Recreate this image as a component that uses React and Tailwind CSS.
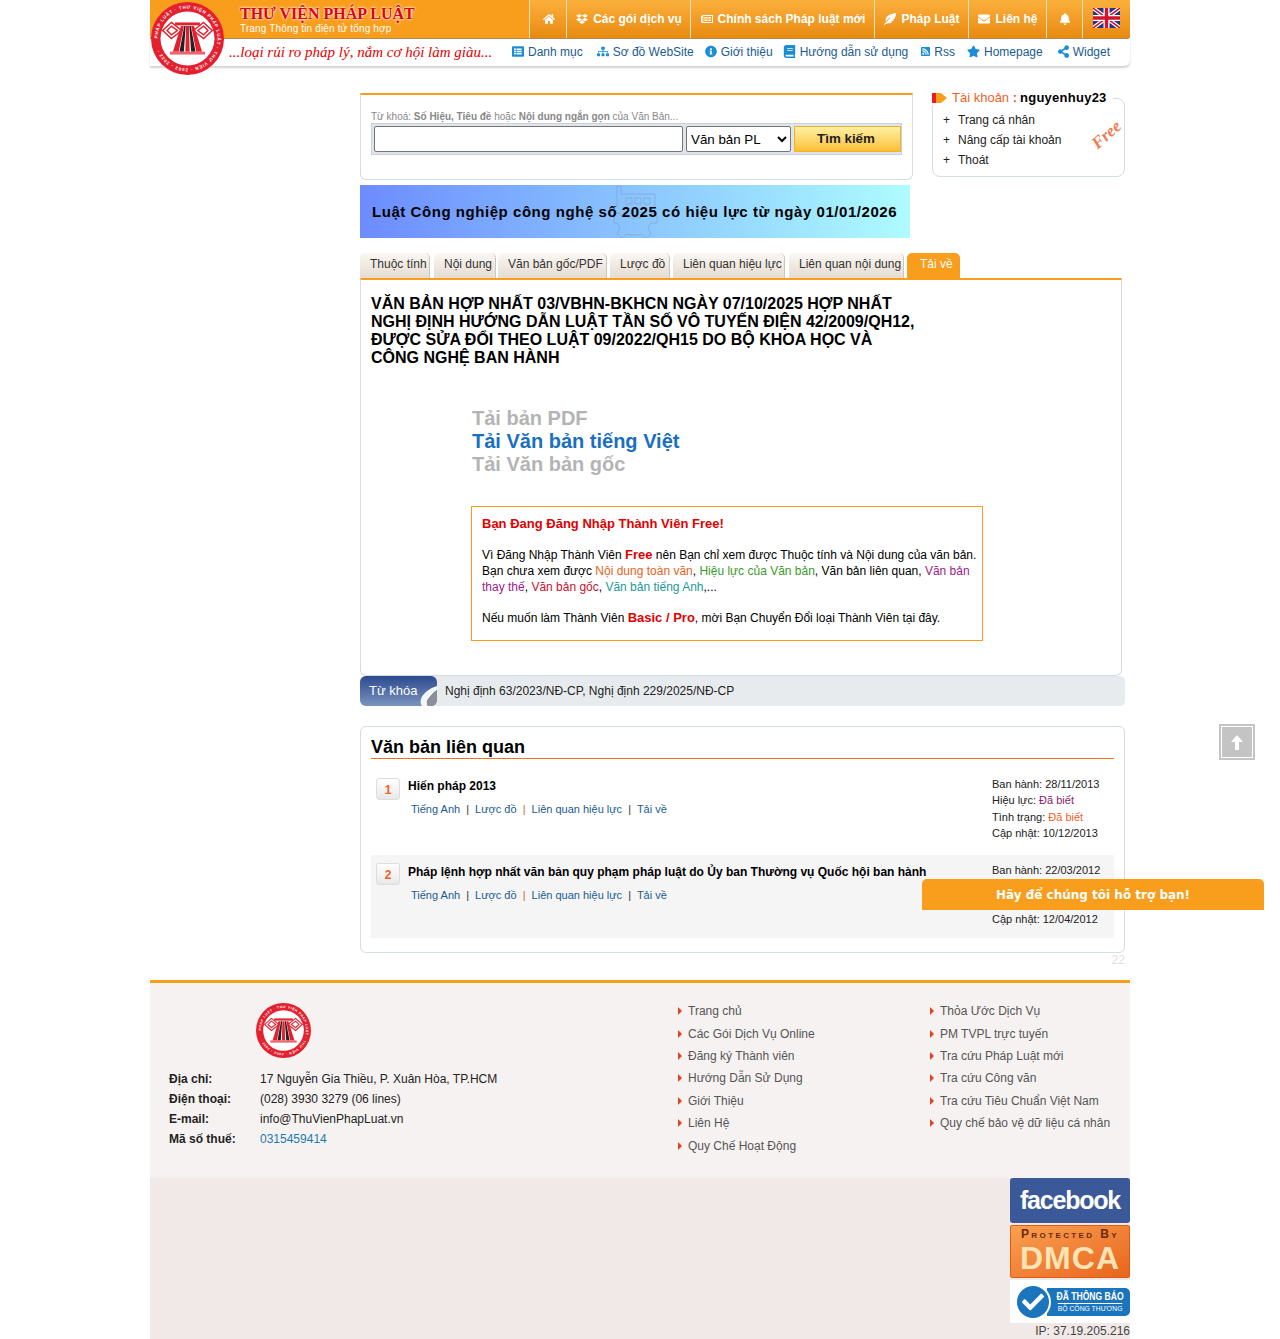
import React from "react";
import {
  FaHome, FaDropbox, FaRegNewspaper, FaEnvelope, FaBell, FaListAlt, FaSitemap,
  FaInfoCircle, FaBook, FaRssSquare, FaStar, FaShareAlt, FaFeatherAlt, FaCheck,
} from "react-icons/fa";

const topNav = [
  { icon: FaHome, label: "", width: "w-[37px]" },
  { icon: FaDropbox, label: "Các gói dịch vụ", width: "w-[124px]" },
  { icon: FaRegNewspaper, label: "Chính sách Pháp luật mới", width: "w-[184px]" },
  { icon: FaFeatherAlt, label: "Pháp Luật", width: "w-[94px]" },
  { icon: FaEnvelope, label: "Liên hệ", width: "w-[78px]" },
  { icon: FaBell, label: "", width: "w-[36px]" },
];

const subNav = [
  { icon: FaListAlt, label: "Danh mục", ml: "ml-0", w: "w-[12px]" },
  { icon: FaSitemap, label: "Sơ đồ WebSite", ml: "ml-[14px]", w: "w-[12px]" },
  { icon: FaInfoCircle, label: "Giới thiệu", ml: "ml-[11px]", w: "w-[12px]" },
  { icon: FaBook, label: "Hướng dẫn sử dụng", ml: "ml-[10px]", w: "w-[13px]" },
  { icon: FaRssSquare, label: "Rss", ml: "ml-[13px]", w: "w-[9px]" },
  { icon: FaStar, label: "Homepage", ml: "ml-[12px]", w: "w-[13px]" },
  { icon: FaShareAlt, label: "Widget", ml: "ml-[15px]", w: "w-[11px]" },
];

const tabs = [
  { label: "Thuộc tính", width: "w-[70px]", ml: "ml-0" },
  { label: "Nội dung", width: "w-[62px]", ml: "ml-[4px]" },
  { label: "Văn bản gốc/PDF", width: "w-[109px]", ml: "ml-[2px]" },
  { label: "Lược đồ", width: "w-[60px]", ml: "ml-[3px]" },
  { label: "Liên quan hiệu lực", width: "w-[112px]", ml: "ml-[3px]" },
  { label: "Liên quan nội dung", width: "w-[115px]", ml: "ml-[4px]" },
];

const footerLeft = ["Trang chủ", "Các Gói Dịch Vụ Online", "Đăng ký Thành viên", "Hướng Dẫn Sử Dụng", "Giới Thiệu", "Liên Hệ", "Quy Chế Hoạt Động"];
const footerRight = ["Thỏa Ước Dịch Vụ", "PM TVPL trực tuyến", "Tra cứu Pháp Luật mới", "Tra cứu Công văn", "Tra cứu Tiêu Chuẩn Việt Nam", "Quy chế bảo vệ dữ liệu cá nhân"];

function Seal({ size, id }) {
  return (
    <svg width={size} height={size} viewBox="0 0 100 100">
      <circle cx="50" cy="50" r="50" fill="#e5202e" />
      <circle cx="50" cy="50" r="37" fill="#fff" />
      <defs>
        <path id={id} d="M50 50 m-41 0 a41 41 0 1 1 82 0 a41 41 0 1 1 -82 0" />
      </defs>
      <text fontSize="6" fontWeight="700" fill="#fff" fontFamily="Liberation Sans, sans-serif" letterSpacing="1.1">
        <textPath href={`#${id}`}>PHÁP LUẬT · THƯ VIỆN PHÁP LUẬT · THƯ VIỆN · 2002 - 2022 ·</textPath>
      </text>
      {/* cap trai, cap phai */}
      <path d="M28 28L42 39 28 50 16 39z" fill="none" stroke="#e5202e" strokeWidth="2" />
      <path d="M28 33L36 39 28 45 22 39z" fill="none" stroke="#e5202e" strokeWidth="2" />
      <path d="M72 28L84 39 72 50 58 39z" fill="none" stroke="#e5202e" strokeWidth="2" />
      <path d="M72 33L78 39 72 45 64 39z" fill="none" stroke="#e5202e" strokeWidth="2" />
      <path d="M33 28H67V32H33z" fill="#e5202e" />
      <path d="M30 68L41 33h4L38 68zM47 68L48 33h4l1 35zM62 68L55 33h4l11 35z" fill="#e5202e" />
      <path d="M39 68L45.500 33h2L45 68zM55 68L52.500 33h2L61 68z" fill="#222" />
      <rect x="26" y="68" width="48" height="4" fill="#f0626c" />
    </svg>
  );
}

function UkFlag() {
  return (
    <svg width="27" height="20" viewBox="0 0 27 20">
      <rect width="27" height="20" fill="#27357e" />
      <path d="M0 0L27 20M27 0L0 20" stroke="#fff" strokeWidth="4" />
      <path d="M0 0L27 20M27 0L0 20" stroke="#cf142b" strokeWidth="1.6" />
      <path d="M13.5 0V20M0 10H27" stroke="#fff" strokeWidth="6" />
      <path d="M13.5 0V20M0 10H27" stroke="#cf142b" strokeWidth="3.4" />
    </svg>
  );
}

function Header() {
  return (
    <header className="relative h-[68px]">
      <div className="absolute left-px top-[2px] z-10">
        <Seal size={73} id="sealTop" />
      </div>
      <div className="flex h-[39px] justify-between rounded-br-[3px] border-b border-b-[#b08a5a] bg-[#f99d1c]">
        <div className="pl-[90px] pt-[5px]">
          <div className="text-[16px] font-bold leading-[17px] text-[#e3000f] [font-family:'Liberation_Serif',serif] [text-shadow:0_0_3px_#fff,0_0_2px_#fff]">
            THƯ VIỆN PHÁP LUẬT
          </div>
          <div className="text-[10px] leading-[13px] tracking-[0.15px] text-white">Trang Thông tin điện tử tổng hợp</div>
        </div>
        <nav className="flex h-[38px] bg-gradient-to-b from-[#fbb03b] to-[#e88a0c]">
          {topNav.map(({ icon: Icon, label, width }, i) => (
            <a key={i} className={`flex ${width} items-center justify-center gap-[5px] border-l border-l-[#fde3b8] pl-px text-[12px] font-bold text-white`}>
              <Icon className="text-[12px]" />
              {label}
            </a>
          ))}
          <div className="flex w-[48px] items-start justify-center border-l border-l-[#fde3b8] pt-[8px]">
            <UkFlag />
          </div>
        </nav>
      </div>
      <div className="flex h-[27px] items-center rounded-br-[6px] shadow-[0_2px_2px_rgba(0,0,0,0.18)]">
        <div className="w-[362px] pl-[79px] text-[15px] italic text-[#e80000] [font-family:'Liberation_Serif',serif]">
          ...loại rủi ro pháp lý, nắm cơ hội làm giàu...
        </div>
        {subNav.map(({ icon: Icon, label, ml, w }) => (
          <a key={label} className={`-mt-[2px] flex items-center gap-[4px] text-[12px] text-[#1a5b8f] ${ml}`}>
            <Icon className={`${w} text-[13px] text-[#1b8dd6]`} />
            {label}
          </a>
        ))}
      </div>
    </header>
  );
}

function SearchBox() {
  return (
    <div className="h-[87px] rounded-b-[6px] border border-t-2 border-[#d3dde3] border-t-[#f99d1c] px-[10px] pt-[15px]">
      <div className="text-[10px] leading-[13px] text-[#888]">
        Từ khoá: <b>Số Hiệu, Tiêu đề</b> hoặc <b>Nội dung ngắn gọn</b> của Văn Bản...
      </div>
      <div className="flex h-[32px] w-[531px] items-center gap-[3px] border border-[#c9d2d8] bg-[#dfe5ea] pl-[2px]">
        <input className="h-[26px] w-[309px] rounded-[2px] border border-[#767676] bg-white" />
        <select className="h-[26px] w-[105px] rounded-[2px] border border-[#767676] bg-white text-[13.33px] text-black">
          <option>Văn bản PL</option>
        </select>
        <button className="h-[26px] w-[107px] border border-[#f0b030] bg-gradient-to-b from-[#fff0a0] to-[#fbc02d] pr-[3px] text-[13.33px] font-bold text-[#222]">
          Tìm kiếm
        </button>
      </div>
    </div>
  );
}

function AccountBox() {
  return (
    <div className="relative ml-[19px] mt-[5px] h-[79px] w-[193px] rounded-[8px] border border-[#d3dde3] pl-[10px] pt-[11px]">
      <div className="absolute -top-[8px] -left-px flex items-center gap-[5px] bg-white pr-[6px] text-[13px] leading-[14px]">
        <span className="flex h-[10px] w-[15px]">
          <span className="w-[4px] bg-[#e8201c]" />
          <span className="w-[11px] bg-[#f99d1c] [clip-path:polygon(0_0,45%_0,100%_50%,45%_100%,0_100%)]" />
        </span>
        <span className="text-[#f4601f]">Tài khoản <b>:</b></span>
        <b className="-ml-[2px] tracking-[0.25px] text-black">nguyenhuy23</b>
      </div>
      {["Trang cá nhân", "Nâng cấp tài khoản", "Thoát"].map((t) => (
        <div key={t} className="flex h-[20px] items-center gap-[8px] text-[12px] text-[#222]">
          <span>+</span>
          {t}
        </div>
      ))}
      <div className="absolute right-[1px] top-[23px] -rotate-[42deg] text-[17px] font-bold italic text-[#f07b4f] [font-family:'Liberation_Serif',serif]">
        Free
      </div>
    </div>
  );
}

function Banner() {
  return (
    <div className="relative mt-[5px] flex h-[53px] w-[550px] items-center overflow-hidden bg-gradient-to-r from-[#6d8bff] to-[#aefcff] pl-[12px] pt-[1px]">
      <svg className="absolute left-[252px] top-0" width="46" height="53" viewBox="0 0 46 53" fill="none" stroke="#7d9cc0" strokeWidth="1" opacity="0.55">
        <path d="M5 22V1h4v8h34v13" />
        <path d="M14 13h6v6h-6zM23 13h6v6h-6zM32 13h6v6h-6z" />
        <path d="M2 28h6l2 4 6-2 4 3h8l4-3 6 2 2-4h5v10h-6l-3 5 3 6-5 4-5-4-3 1h-8l-3-1-5 4-5-4 3-6-3-5H2z" />
      </svg>
      <span className="relative text-[15px] font-bold tracking-[0.55px] text-black">
        Luật Công nghiệp công nghệ số 2025 có hiệu lực từ ngày 01/01/2026
      </span>
    </div>
  );
}

function Tabs() {
  return (
    <div className="mt-[15px] flex h-[25px] w-[762px]">
      {tabs.map(({ label, width, ml }) => (
        <div key={label} className={`${width} ${ml} whitespace-nowrap rounded-t-[5px] border-r border-r-[#cfc5bb] bg-gradient-to-b from-[#faf7f3] to-[#e6dcd2] pl-[10px] pt-[2px] text-[12px] text-[#333]`}>
          {label}
        </div>
      ))}
      <div className="ml-[3px] w-[53px] rounded-t-[5px] bg-[#f99d1c] pl-[13px] pt-[2px] text-[12px] text-white">Tải về</div>
    </div>
  );
}

function DownloadPanel() {
  return (
    <div className="h-[398px] w-[762px] rounded-b-[6px] border border-t-2 border-[#d3dde3] border-t-[#f99d1c] pl-[10px] pt-[15px]">
      <h1 className="w-[550px] text-[16px] font-bold leading-[18px] text-black">
        VĂN BẢN HỢP NHẤT 03/VBHN-BKHCN NGÀY 07/10/2025 HỢP NHẤT NGHỊ ĐỊNH HƯỚNG DẪN LUẬT TẦN SỐ VÔ TUYẾN ĐIỆN 42/2009/QH12, ĐƯỢC SỬA ĐỔI THEO LUẬT 09/2022/QH15 DO BỘ KHOA HỌC VÀ CÔNG NGHỆ BAN HÀNH
      </h1>
      <div className="ml-[101px] mt-[40px] text-[20px] font-bold leading-[23px]">
        <div className="text-[#b4b4b4]">Tải bản PDF</div>
        <div className="text-[#1a6fc0]">Tải Văn bản tiếng Việt</div>
        <div className="text-[#b4b4b4]">Tải Văn bản gốc</div>
      </div>
      <div className="ml-[100px] mt-[30px] h-[135px] w-[512px] border border-[#f99d1c] pl-[10px] pr-[4px] pt-[9px] text-[12px] leading-[16px] text-black">
        <div className="text-[13px] font-bold text-[#e00000]">Bạn Đang Đăng Nhập Thành Viên Free!</div>
        <div className="mt-[15px]">
          Vì Đăng Nhập Thành Viên <b className="text-[13px] leading-[14px] text-[#e00000]">Free</b> nên Bạn chỉ xem được Thuộc tính và Nội dung của văn bản.
          <br />
          Bạn chưa xem được <span className="text-[#e8641b]">Nội dung toàn văn</span>, <span className="text-[#3a9a2a]">Hiệu lực của Văn bản</span>, Văn bản liên quan, <span className="text-[#9c1a8c]">Văn bản thay thế</span>, <span className="text-[#c8102e]">Văn bản gốc</span>, <span className="text-[#1a9a9a]">Văn bản tiếng Anh</span>,...
        </div>
        <div className="mt-[15px]">
          Nếu muốn làm Thành Viên <b className="text-[13px] leading-[14px] text-[#e00000]">Basic / Pro</b>, mời Bạn Chuyển Đổi loại Thành Viên tại đây.
        </div>
      </div>
    </div>
  );
}

function KeywordBar() {
  return (
    <div className="flex h-[30px] items-center rounded-[5px] bg-[#e8ebee] text-[12px] text-[#222]">
      <div className="relative flex h-full w-[77px] items-center rounded-[6px] bg-gradient-to-b from-[#2d4a8f] to-[#7b93bd] pl-[9px] text-[13px] text-white">
        Từ khóa
        <svg className="absolute bottom-0 right-0" width="17" height="20" viewBox="0 0 17 20">
          <path d="M17 0C10 2 3 7 1 13c-1 3 0 6 1 7h6c-2-3-1-6 1-8 2-3 5-6 8-8z" fill="#f4f5f7" />
          <path d="M8 20c-2-3-1-6 1-8 2-3 5-6 8-8v10c0 3-2 6-5 6z" fill="#8a8f99" />
        </svg>
      </div>
      <span className="ml-[8px]">Nghị định 63/2023/NĐ-CP, Nghị định 229/2025/NĐ-CP</span>
    </div>
  );
}

function Related({ no, title, dates, shaded }) {
  return (
    <div className={`flex h-[83px] pl-[5px] ${shaded ? "bg-[#f5f5f5] pt-[9px]" : "pt-[6px]"}`}>
      <div className={`flex h-[22px] w-[24px] shrink-0 items-center justify-center rounded-[3px] border border-[#ddd] bg-gradient-to-b from-[#fff] to-[#e8e8e8] pt-[2px] text-[12px] font-bold text-[#f4601f] ${shaded ? "-mt-[1px]" : "mt-0"}`}>
        {no}
      </div>
      <div className="ml-[8px] w-[584px]">
        <div className="text-[12px] font-bold leading-[16px] text-black">{title}</div>
        <div className="ml-[3px] mt-[8px] text-[11px] leading-[14px] text-[#1a5b8f]">
          Tiếng Anh <span className="mx-[3px] text-[#333]">|</span> Lược đồ <span className="mx-[3px] text-[#d9681d]">|</span> Liên quan hiệu lực <span className="mx-[3px] text-[#333]">|</span> Tải về
        </div>
      </div>
      <div className="-mt-[2px] text-[11px] leading-[16.4px] text-[#222]">
        {dates}
      </div>
    </div>
  );
}

function RelatedBox() {
  return (
    <div className="mt-[20px] h-[227px] rounded-[6px] border border-[#d3dde3] px-[10px] pt-[9px]">
      <h2 className="border-b border-b-[#f4701f] text-[18px] font-bold leading-[22px] text-black">Văn bản liên quan</h2>
      <div className="mt-[13px]">
        <Related
          no="1"
          title="Hiến pháp 2013"
          dates={<>Ban hành: 28/11/2013<br />Hiệu lực: <span className="text-[#8a1a6a]">Đã biết</span><br />Tình trạng: <span className="text-[#f4601f]">Đã biết</span><br />Cập nhật: 10/12/2013</>}
        />
        <Related
          shaded
          no="2"
          title="Pháp lệnh hợp nhất văn bản quy phạm pháp luật do Ủy ban Thường vụ Quốc hội ban hành"
          dates={<>Ban hành: 22/03/2012<br />Hiệu lực: <span className="text-[#8a1a6a]">Đã biết</span><br />Tình trạng: <span className="text-[#f4601f]">Đã biết</span><br />Cập nhật: 12/04/2012</>}
        />
      </div>
    </div>
  );
}

function Badges() {
  return (
    <div className="flex w-[120px] flex-col">
      <div className="flex h-[45px] items-center justify-center rounded-[3px] bg-[#3b5998] text-[25px] font-bold tracking-[-1.2px] text-white">
        facebook
      </div>
      <div className="mt-[2px] flex h-[53px] flex-col items-center rounded-[2px] border border-[#e05a10] bg-gradient-to-br from-[#f9a050] to-[#e8641b] pt-[2px]">
        <div className="whitespace-nowrap text-[12px] font-bold leading-[13px] tracking-[2.4px] text-[#6a2a10] [font-variant:small-caps]">Protected By</div>
        <div className="text-[32px] font-bold leading-[34px] tracking-[1px] text-[#fbe3b5]">DMCA</div>
      </div>
      <div className="mt-[2px] flex h-[43px] items-center bg-white pl-[5px]">
        <div className="z-10 flex h-[36px] w-[36px] shrink-0 items-center justify-center rounded-full border-[2px] border-white bg-[#1b75bc] text-[22px] text-white">
          <FaCheck />
        </div>
        <div className="-ml-[4px] flex h-[28px] w-[83px] flex-col items-center justify-center overflow-hidden rounded-r-[5px] bg-[#1b75bc] pl-[4px] text-white">
          <div className="scale-x-[0.78] whitespace-nowrap text-[11px] font-bold leading-[13px]">ĐÃ THÔNG BÁO</div>
          <div className="scale-x-[0.85] whitespace-nowrap border-t border-t-white text-[8px] leading-[10px]">BỘ CÔNG THƯƠNG</div>
        </div>
      </div>
      <div className="text-right text-[12px] leading-[16px] text-[#444]">IP: 37.19.205.216</div>
    </div>
  );
}

function FooterLinks({ items, width }) {
  return (
    <ul className={width}>
      {items.map((t) => (
        <li key={t} className="flex h-[22.4px] items-center gap-[6px] pl-px text-[12px] text-[#555]">
          <span className="h-0 w-0 border-y-[4px] border-l-[4px] border-y-transparent border-l-[#e8401c]" />
          {t}
        </li>
      ))}
    </ul>
  );
}

function Footer() {
  const rows = [
    ["Địa chỉ:", "17 Nguyễn Gia Thiều, P. Xuân Hòa, TP.HCM"],
    ["Điện thoại:", "(028) 3930 3279 (06 lines)"],
    ["E-mail:", "info@ThuVienPhapLuat.vn"],
    ["Mã số thuế:", <span className="text-[#1a7ab0]">0315459414</span>],
  ];
  return (
    <footer className="mt-[13px] border-t-[3px] border-t-[#f99d1c] bg-[#f0e9e8]">
      <div className="flex h-[195px] bg-[#f6f2f1]">
        <div className="w-[527px] pl-[19px] pt-[20px]">
          <div className="ml-[87px]">
            <Seal size={55} id="sealFooter" />
          </div>
          <div className="mt-[11px]">
            {rows.map(([k, v]) => (
              <div key={k} className="flex h-[20px] items-center text-[12px] text-[#222]">
                <b className="w-[91px]">{k}</b>
                <span>{v}</span>
              </div>
            ))}
          </div>
        </div>
        <div className="flex pt-[17px]">
          <FooterLinks items={footerLeft} width="w-[252px]" />
          <FooterLinks items={footerRight} width="w-[200px]" />
        </div>
      </div>
      <div className="flex h-[162px] justify-end">
        <Badges />
      </div>
    </footer>
  );
}

export default function App() {
  return (
    <div className="relative h-[1339px] overflow-hidden bg-white text-[12px] [font-family:'Liberation_Sans',Arial,sans-serif]">
      <div className="mx-auto w-[980px]">
        <Header />
        <main className="ml-[210px] w-[765px] pt-[25px]">
          <div className="flex">
            <div className="w-[553px]">
              <SearchBox />
              <Banner />
            </div>
            <AccountBox />
          </div>
          <Tabs />
          <DownloadPanel />
          <KeywordBar />
          <RelatedBox />
          <div className="text-right text-[12px] leading-[14px] text-[#e3dfdf]">22</div>
        </main>
        <Footer />
      </div>

      <div className="absolute left-[1219px] top-[724px] flex h-[36px] w-[36px] items-center justify-center border-[2px] border-[#c4c4c4] bg-[#c4c4c4] shadow-[inset_0_0_0_1px_#fff]">
        <svg width="14" height="15" viewBox="0 0 14 15" fill="#fff">
          <path d="M7 0L13 7H9V15H5V7H1z" />
        </svg>
      </div>
      <div className="absolute left-[922px] top-[879px] flex h-[31px] w-[342px] items-center justify-center rounded-t-[5px] bg-[#f99d1c] text-[12px] font-bold text-white [font-family:'DejaVu_Sans',sans-serif]">
        Hãy để chúng tôi hỗ trợ bạn!
      </div>
    </div>
  );
}
